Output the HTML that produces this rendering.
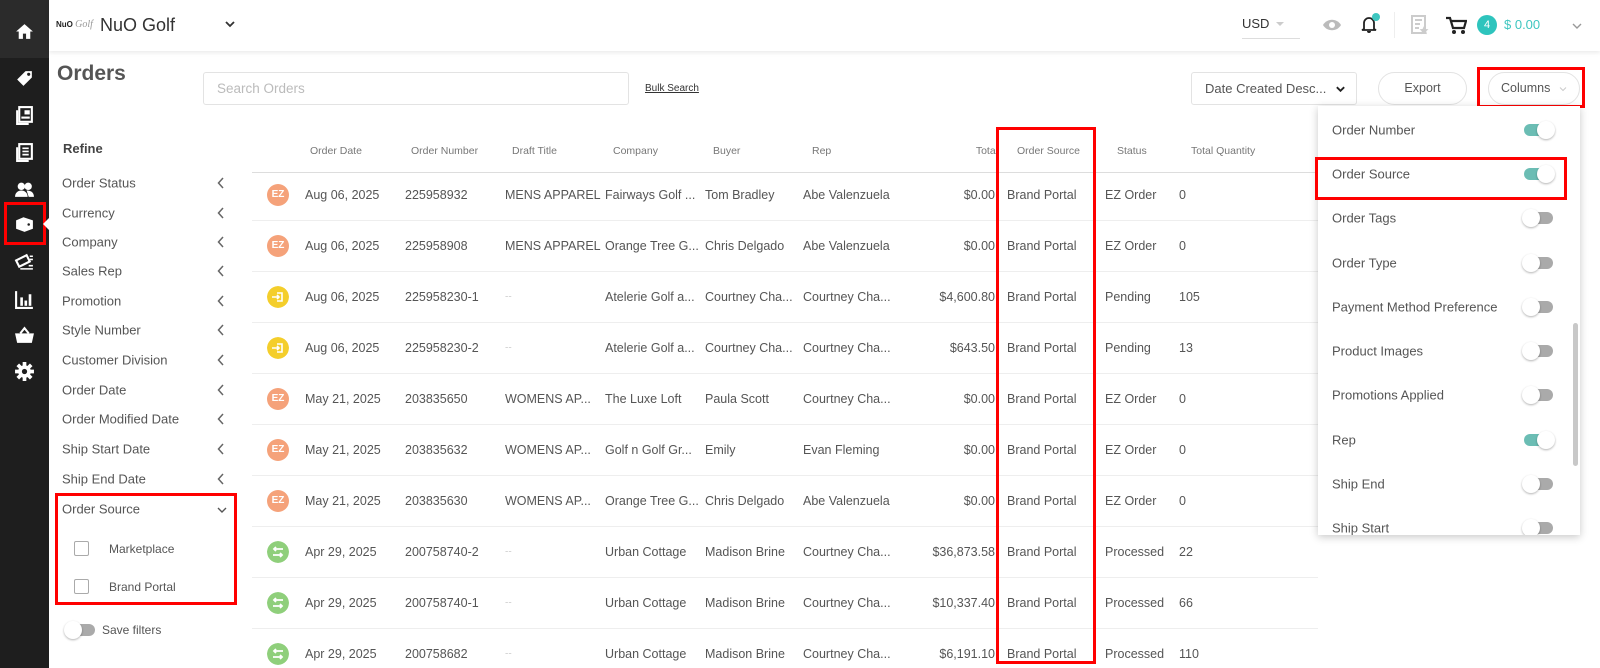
<!DOCTYPE html>
<html><head><meta charset="utf-8"><style>
*{margin:0;padding:0;box-sizing:border-box}
body{width:1600px;height:668px;overflow:hidden;background:#fff;font-family:"Liberation Sans",sans-serif;color:#555;position:relative}
.a{position:absolute;white-space:nowrap}
.side{left:0;top:0;width:49px;height:668px;background:#1e1e1e}
.ic{position:absolute;left:14px;width:21px;height:21px}
.top{left:49px;top:0;width:1551px;height:51px;background:#fff;box-shadow:0 2px 4px rgba(0,0,0,.08)}
.f{font-size:13px;color:#555;left:62px;transform:translateY(-50%)}
.chev{left:217px;width:8px;height:12px;transform:translateY(-50%)}
.hd{font-size:10.5px;color:#777;top:145px}
.cell{font-size:12.5px;color:#555;transform:translateY(-50%)}
.line{left:252px;width:1066px;height:1px;background:#eee}
.dot{width:22px;height:22px;border-radius:50%;left:267px;color:#fff;font-size:10px;font-weight:bold;text-align:center;line-height:22px;transform:translateY(-50%)}
.red{border:3px solid #f00}
.tg{left:1524px;width:29px;height:12px;border-radius:6px;background:#aaa;transform:translateY(-50%)}
.tg::after{content:"";position:absolute;top:-3px;left:-2px;width:18px;height:18px;border-radius:50%;background:#fff;box-shadow:0 1px 2px rgba(0,0,0,.3)}
.tg.on{background:#6bbdb4}
.tg.on::after{left:13px}
.di{font-size:13px;color:#555;left:1332px;transform:translateY(-50%)}
</style></head><body>
<div class="a side">
 <div class="a" style="left:0;top:0;width:49px;height:58px;background:#2b2b2b"></div>
 <svg class="ic" style="top:21px" viewBox="0 0 20 20"><path d="M10 3L2 10h2.5v7h4v-5h3v5h4v-7H18z" fill="#fff"/></svg>
 <svg class="ic" style="top:68px" viewBox="0 0 20 20"><path d="M3 11l8-8h6v6l-8 8z" fill="#fff"/><circle cx="14" cy="6" r="1.5" fill="#1e1e1e"/></svg>
 <svg class="ic" style="top:105px" viewBox="0 0 20 20"><rect x="5" y="2" width="12" height="14" fill="none" stroke="#fff" stroke-width="2"/><path d="M3 5v13h11" fill="none" stroke="#fff" stroke-width="2"/><rect x="10" y="5" width="5" height="4" fill="#fff"/><rect x="7" y="11" width="8" height="2" fill="#fff"/></svg>
 <svg class="ic" style="top:142px" viewBox="0 0 20 20"><rect x="5" y="2" width="12" height="14" fill="none" stroke="#fff" stroke-width="2"/><path d="M3 5v13h11" fill="none" stroke="#fff" stroke-width="2"/><path d="M8 6h6M8 9h6M8 12h6" stroke="#fff" stroke-width="1.6"/></svg>
 <svg class="ic" style="top:179px" viewBox="0 0 20 20"><circle cx="7" cy="7" r="3.5" fill="#fff"/><circle cx="13.5" cy="7" r="3.5" fill="#fff"/><path d="M1 17c0-4 3-6 6-6s6 2 6 6zM12 11c3 0 7 1 7 6h-5" fill="#fff"/></svg>
 <div class="a red" style="left:4px;top:202px;width:42px;height:43px"></div>
 <svg class="ic" style="top:213px" viewBox="0 0 20 20"><path d="M2 7l7-3 9 3v8l-8 3-8-3z" fill="#fff"/><circle cx="14" cy="11" r="1.2" fill="#1e1e1e"/></svg>
 <div class="a" style="left:43px;top:218px;width:0;height:0;border-top:6px solid transparent;border-bottom:6px solid transparent;border-right:6px solid #fff"></div>
 <svg class="ic" style="top:251px" viewBox="0 0 20 20"><path d="M2 9l10-5 3 6-10 5z" fill="none" stroke="#fff" stroke-width="2"/><path d="M15 5h3M15 8h3M14 14h4M6 17h12" stroke="#fff" stroke-width="1.5"/></svg>
 <svg class="ic" style="top:289px" viewBox="0 0 20 20"><path d="M2 2v16h16" fill="none" stroke="#fff" stroke-width="2"/><rect x="6" y="8" width="2.5" height="8" fill="#fff"/><rect x="10" y="11" width="2.5" height="5" fill="#fff"/><rect x="14" y="5" width="2.5" height="11" fill="#fff"/></svg>
 <svg class="ic" style="top:325px" viewBox="0 0 20 20"><path d="M1 8h18l-2 9H3z" fill="#fff"/><path d="M6 8l4-5 4 5" fill="none" stroke="#fff" stroke-width="2"/></svg>
 <svg class="ic" style="top:361px" viewBox="0 0 20 20"><circle cx="10" cy="10" r="6" fill="#fff"/><path d="M10 1v18M1 10h18M3.6 3.6l12.8 12.8M16.4 3.6L3.6 16.4" stroke="#fff" stroke-width="3.5"/><circle cx="10" cy="10" r="2.5" fill="#1e1e1e"/></svg>
</div>
<div class="a top"></div>
<div class="a" style="left:56px;top:19px;font-size:8px;font-weight:bold;color:#222">NuO <span style="font-family:'Liberation Serif';font-style:italic;color:#999;font-weight:normal;font-size:10px">Golf</span></div>
<div class="a" style="left:100px;top:15px;font-size:18px;color:#333">NuO Golf</div>
<svg class="a" style="left:224px;top:20px" width="12" height="8" viewBox="0 0 12 8"><path d="M2 2l4 4 4-4" stroke="#333" stroke-width="1.8" fill="none"/></svg>
<div class="a" style="left:1242px;top:16px;font-size:13px;color:#333">USD</div>
<div class="a" style="left:1276px;top:22px;border-left:4px solid transparent;border-right:4px solid transparent;border-top:4px solid #ccc"></div>
<div class="a" style="left:1242px;top:38px;width:58px;height:1px;background:#ddd"></div>
<svg class="a" style="left:1322px;top:18px" width="20" height="14" viewBox="0 0 20 14"><path d="M1 7c4-7 14-7 18 0-4 7-14 7-18 0z" fill="#bbb"/><circle cx="10" cy="7" r="3" fill="#fff"/></svg>
<svg class="a" style="left:1361px;top:14px" width="16" height="20" viewBox="0 0 16 20"><path d="M3 15V9a5 5 0 0110 0v6l2 1H1z" fill="none" stroke="#222" stroke-width="1.8"/><path d="M6 17a2 2 0 004 0" fill="#222"/></svg>
<div class="a" style="left:1372px;top:13px;width:8px;height:8px;border-radius:50%;background:#3ec6c0"></div>
<div class="a" style="left:1394px;top:12px;width:1px;height:26px;background:#eee"></div>
<svg class="a" style="left:1411px;top:15px" width="18" height="20" viewBox="0 0 18 20"><rect x="1" y="1" width="13" height="17" fill="none" stroke="#ccc" stroke-width="2"/><path d="M4 5h7M4 9h5M4 13h4" stroke="#ccc" stroke-width="2"/><path d="M13 11l1.5 3 3 .3-2.3 2 .8 3-3-1.7-3 1.7.8-3-2.3-2 3-.3z" fill="#ccc"/></svg>
<svg class="a" style="left:1445px;top:16px" width="22" height="19" viewBox="0 0 22 19"><path d="M1 2h4l3 10h11l2-7H6" fill="none" stroke="#222" stroke-width="2.2"/><circle cx="9" cy="16" r="2" fill="#222"/><circle cx="18" cy="16" r="2" fill="#222"/></svg>
<div class="a" style="left:1477px;top:15px;width:20px;height:20px;border-radius:50%;background:#2ec4bd;color:#fff;font-size:11px;text-align:center;line-height:20px">4</div>
<div class="a" style="left:1504px;top:17px;font-size:13px;color:#3ec6c0">$ 0.00</div>
<svg class="a" style="left:1571px;top:22px" width="12" height="8" viewBox="0 0 12 8"><path d="M2 2l4 4 4-4" stroke="#999" stroke-width="1.4" fill="none"/></svg>

<div class="a" style="left:57px;top:62px;font-size:21px;font-weight:bold;color:#555">Orders</div>
<div class="a" style="left:203px;top:72px;width:426px;height:33px;border:1px solid #e3e3e3;border-radius:3px"></div>
<div class="a" style="left:217px;top:81px;font-size:13.5px;color:#bbb">Search Orders</div>
<div class="a" style="left:645px;top:83px;font-size:10px;color:#333;text-decoration:underline">Bulk Search</div>
<div class="a" style="left:1191px;top:72px;width:166px;height:33px;border:1px solid #e3e3e3;border-radius:3px"></div>
<div class="a" style="left:1205px;top:81px;font-size:13px;color:#555">Date Created Desc...</div>
<svg class="a" style="left:1335px;top:85px" width="11" height="8" viewBox="0 0 12 8"><path d="M2 2l4 4 4-4" stroke="#222" stroke-width="2" fill="none"/></svg>
<div class="a" style="left:1378px;top:72px;width:89px;height:33px;border:1px solid #e3e3e3;border-radius:17px;font-size:12.5px;text-align:center;line-height:31px">Export</div>
<div class="a" style="left:1488px;top:72px;width:92px;height:33px;border:1px solid #e3e3e3;border-radius:17px"></div>
<div class="a" style="left:1501px;top:81px;font-size:12.5px;color:#555">Columns</div>
<svg class="a" style="left:1558px;top:86px" width="10" height="6" viewBox="0 0 12 8"><path d="M2 2l4 4 4-4" stroke="#ccc" stroke-width="1.4" fill="none"/></svg>
<div class="a red" style="left:1477px;top:67px;width:108px;height:41px"></div>

<div class="a" style="left:63px;top:141px;font-size:13px;font-weight:bold;color:#444">Refine</div>
<div id="filt"></div>
<div class="a f" style="top:509px">Order Source</div>
<svg class="a" style="left:216px;top:506px" width="12" height="8" viewBox="0 0 12 8"><path d="M2 2l4 4 4-4" stroke="#555" stroke-width="1.4" fill="none"/></svg>
<div class="a red" style="left:55px;top:493px;width:182px;height:112px"></div>
<div class="a" style="left:74px;top:541px;width:15px;height:15px;border:1px solid #aaa;border-radius:2px"></div>
<div class="a f" style="left:109px;top:549px;font-size:12px">Marketplace</div>
<div class="a" style="left:74px;top:579px;width:15px;height:15px;border:1px solid #aaa;border-radius:2px"></div>
<div class="a f" style="left:109px;top:587px;font-size:12px">Brand Portal</div>
<div class="a" style="left:66px;top:624px;width:29px;height:12px;border-radius:6px;background:#aaa"></div>
<div class="a" style="left:64px;top:621px;width:18px;height:18px;border-radius:50%;background:#fff;box-shadow:0 1px 2px rgba(0,0,0,.3)"></div>
<div class="a f" style="left:102px;top:630px;font-size:12px">Save filters</div>

<div class="a hd" style="left:310px">Order Date</div>
<div class="a hd" style="left:411px">Order Number</div>
<div class="a hd" style="left:512px">Draft Title</div>
<div class="a hd" style="left:613px">Company</div>
<div class="a hd" style="left:713px">Buyer</div>
<div class="a hd" style="left:812px">Rep</div>
<div class="a hd" style="left:962px;width:36px;text-align:right">Total</div>
<div class="a hd" style="left:1017px">Order Source</div>
<div class="a hd" style="left:1117px">Status</div>
<div class="a hd" style="left:1191px">Total Quantity</div>
<div class="a line" style="top:172px;background:#ddd"></div>

<div id="rows"></div>
<script>
var F=[["Order Status",183],["Currency",213],["Company",242],["Sales Rep",271],["Promotion",301],["Style Number",330],["Customer Division",360],["Order Date",390],["Order Modified Date",419],["Ship Start Date",449],["Ship End Date",479]];
var g="";F.forEach(function(f){g+='<div class="a f" style="top:'+f[1]+'px">'+f[0]+'</div><svg class="a chev" style="top:'+f[1]+'px" viewBox="0 0 8 12"><path d="M6 1L1.5 6 6 11" stroke="#666" stroke-width="1.5" fill="none"/></svg>';});
document.getElementById("filt").innerHTML=g;
var R=[["ez","Aug 06, 2025","225958932","MENS APPAREL","Fairways Golf ...","Tom Bradley","Abe Valenzuela","$0.00","EZ Order","0"],
["ez","Aug 06, 2025","225958908","MENS APPAREL","Orange Tree G...","Chris Delgado","Abe Valenzuela","$0.00","EZ Order","0"],
["y","Aug 06, 2025","225958230-1","--","Atelerie Golf a...","Courtney Cha...","Courtney Cha...","$4,600.80","Pending","105"],
["y","Aug 06, 2025","225958230-2","--","Atelerie Golf a...","Courtney Cha...","Courtney Cha...","$643.50","Pending","13"],
["ez","May 21, 2025","203835650","WOMENS AP...","The Luxe Loft","Paula Scott","Courtney Cha...","$0.00","EZ Order","0"],
["ez","May 21, 2025","203835632","WOMENS AP...","Golf n Golf Gr...","Emily","Evan Fleming","$0.00","EZ Order","0"],
["ez","May 21, 2025","203835630","WOMENS AP...","Orange Tree G...","Chris Delgado","Abe Valenzuela","$0.00","EZ Order","0"],
["g","Apr 29, 2025","200758740-2","--","Urban Cottage","Madison Brine","Courtney Cha...","$36,873.58","Processed","22"],
["g","Apr 29, 2025","200758740-1","--","Urban Cottage","Madison Brine","Courtney Cha...","$10,337.40","Processed","66"],
["g","Apr 29, 2025","200758682","--","Urban Cottage","Madison Brine","Courtney Cha...","$6,191.10","Processed","110"]];
var h="";
R.forEach(function(r,i){var y=195+51*i;
var d=r[0]=="ez"?'<div class="a dot" style="top:'+y+'px;background:#f5a27a">EZ</div>':
r[0]=="y"?'<svg class="a dot" style="top:'+(y-11)+'px;transform:none" viewBox="0 0 22 22"><circle cx="11" cy="11" r="11" fill="#f4ce2b"/><path d="M10 7h5v8h-5" stroke="#fff" stroke-width="1.6" fill="none"/><path d="M5 11h7M10 9l2 2-2 2" stroke="#fff" stroke-width="1.6" fill="none"/></svg>':
'<svg class="a dot" style="top:'+(y-11)+'px;transform:none" viewBox="0 0 22 22"><circle cx="11" cy="11" r="11" fill="#8fcf7b"/><path d="M16 8H7M9 6L7 8l2 2M6 14h9M13 12l2 2-2 2" stroke="#fff" stroke-width="1.8" fill="none"/></svg>';
h+=d;
var xs=[305,405,505,605,705,803];
for(var k=0;k<6;k++){var c=r[k+1];h+='<div class="a cell" style="left:'+xs[k]+'px;top:'+y+'px;'+(c=="--"?'color:#ccc;font-size:10px':'')+'">'+c+'</div>';}
h+='<div class="a cell" style="left:900px;width:95px;text-align:right;top:'+y+'px">'+r[7]+'</div>';
h+='<div class="a cell" style="left:1007px;top:'+y+'px">Brand Portal</div>';
h+='<div class="a cell" style="left:1105px;top:'+y+'px">'+r[8]+'</div>';
h+='<div class="a cell" style="left:1179px;top:'+y+'px">'+r[9]+'</div>';
if(i<9)h+='<div class="a line" style="top:'+(y+25)+'px"></div>';
});
document.getElementById("rows").innerHTML=h;
</script>
<div class="a red" style="left:996px;top:127px;width:100px;height:537px"></div>

<div class="a" style="left:1318px;top:106px;width:262px;height:429px;background:#fff;box-shadow:0 2px 8px rgba(0,0,0,.22)"></div>
<div class="a di" style="top:130px">Order Number</div><div class="a tg on" style="top:130px"></div>
<div class="a di" style="top:174px">Order Source</div><div class="a tg on" style="top:174px"></div>
<div class="a di" style="top:218px">Order Tags</div><div class="a tg" style="top:218px"></div>
<div class="a di" style="top:263px">Order Type</div><div class="a tg" style="top:263px"></div>
<div class="a di" style="top:307px">Payment Method Preference</div><div class="a tg" style="top:307px"></div>
<div class="a di" style="top:351px">Product Images</div><div class="a tg" style="top:351px"></div>
<div class="a di" style="top:395px">Promotions Applied</div><div class="a tg" style="top:395px"></div>
<div class="a di" style="top:440px">Rep</div><div class="a tg on" style="top:440px"></div>
<div class="a di" style="top:484px">Ship End</div><div class="a tg" style="top:484px"></div>
<div class="a" style="left:1318px;top:106px;width:262px;height:429px;overflow:hidden"><div class="a di" style="left:14px;top:422px">Ship Start</div><div class="a tg" style="left:206px;top:422px"></div></div>
<div class="a" style="left:1573px;top:323px;width:5px;height:143px;border-radius:3px;background:#c8c8c8"></div>
<div class="a red" style="left:1315px;top:157px;width:252px;height:43px"></div>
</body></html>
